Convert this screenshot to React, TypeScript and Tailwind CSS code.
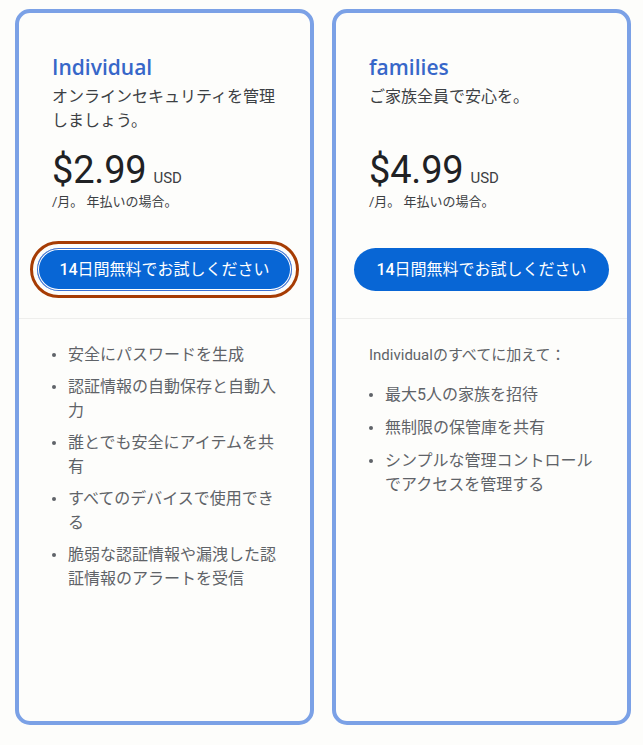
import React from "react";

const font = { fontFamily: 'Roboto, "Noto Sans CJK JP", sans-serif' };

function Bullet({ children }: { children: React.ReactNode }) {
  return (
    <li className="flex items-start">
      <span className="mt-[10px] mr-[12px] h-[4px] w-[4px] shrink-0 rounded-full bg-[#5f6368]" />
      <span>{children}</span>
    </li>
  );
}

function Card({
  title,
  subtitle,
  price,
  focused,
  children,
}: {
  title: string;
  subtitle: string;
  price: string;
  focused?: boolean;
  children: React.ReactNode;
}) {
  return (
    <div className="flex h-[716px] w-[299px] flex-col rounded-[15px] border-4 border-[#7ba1e6] bg-[#fdfdfb]">
      <div className="px-[33px] pt-[40px]">
        <div
          className="text-[21px] leading-[28px] font-semibold text-[#3767c9]"
          style={{ fontFamily: '"Open Sans", "Noto Sans CJK JP", sans-serif' }}
        >
          {title}
        </div>
        <div className="mt-[4px] min-h-[48px] text-[16px] leading-[24px] text-[#3c4043]">{subtitle}</div>
        <div className="mt-[15px] flex items-baseline">
          <span className="text-[38px] leading-[44px] tracking-[-0.2px] text-[#202124]">{price}</span>
          <span className="ml-[7px] text-[15px] text-[#3c4043]">USD</span>
        </div>
        <div className="text-[13px] leading-[20px] text-[#3c4043]">/月。 年払いの場合。</div>
      </div>
      <div className="px-[18px] pt-[36px] pb-[27px]">
        <button
          className={
            "h-[43px] w-full rounded-full bg-[#0866d5] text-[16px] font-normal text-white " +
            (focused
              ? "shadow-[inset_0_0_0_1px_#3c6fd0,inset_0_0_0_2px_#ffffff] outline-[3px] outline-solid outline-[#a63c04] outline-offset-[4px]"
              : "")
          }
        >
          <span className="font-medium">14</span>日間無料でお試しください
        </button>
      </div>
      <div className="h-px bg-[#eeeeec]" />
      <div className="px-[33px] pt-[24px] text-[16px] leading-[24px] text-[#5f6368]">{children}</div>
    </div>
  );
}

export default function App() {
  return (
    <div className="min-h-[745px] w-[643px] bg-[#fdfdfb] pl-[15px] pt-[9px]" style={font}>
      <div className="flex gap-[18px]">
        <Card title="Individual" subtitle="オンラインセキュリティを管理しましょう。" price="$2.99" focused>
          <ul className="flex flex-col gap-[8px]">
            <Bullet>安全にパスワードを生成</Bullet>
            <Bullet>認証情報の自動保存と自動入力</Bullet>
            <Bullet>誰とでも安全にアイテムを共有</Bullet>
            <Bullet>すべてのデバイスで使用できる</Bullet>
            <Bullet>脆弱な認証情報や漏洩した認証情報のアラートを受信</Bullet>
          </ul>
        </Card>
        <Card title="families" subtitle="ご家族全員で安心を。" price="$4.99">
          <div className="text-[15px]">Individualのすべてに加えて：</div>
          <ul className="mt-[16px] flex flex-col gap-[9px]">
            <Bullet>最大5人の家族を招待</Bullet>
            <Bullet>無制限の保管庫を共有</Bullet>
            <Bullet>シンプルな管理コントロールでアクセスを管理する</Bullet>
          </ul>
        </Card>
      </div>
    </div>
  );
}
